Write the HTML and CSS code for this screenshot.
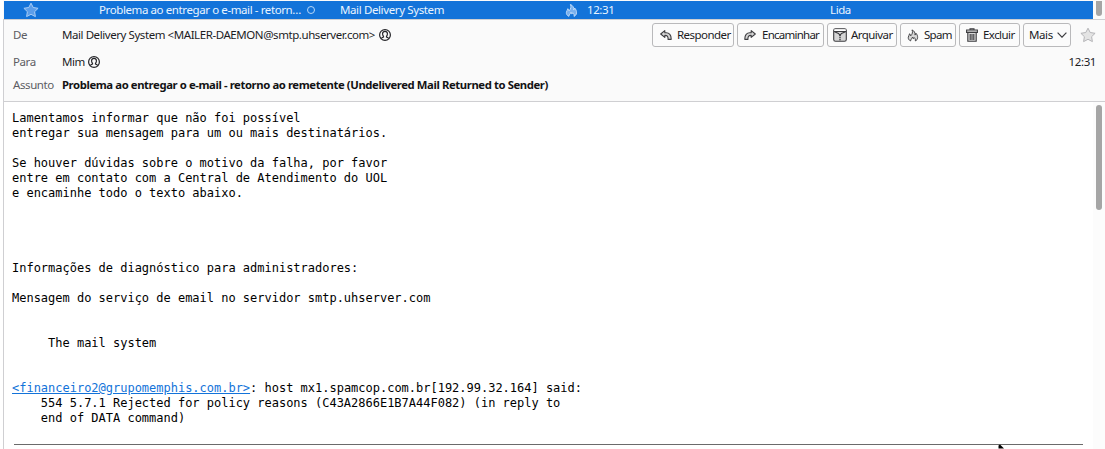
FILE: index.html
```html
<!DOCTYPE html>
<html lang="pt-BR">
<head>
<meta charset="utf-8">
<title>Problema ao entregar o e-mail</title>
<link rel="stylesheet" href="styles.css">
</head>
<body>
<svg class="defs" width="0" height="0">
  <symbol id="star" viewBox="0 0 16 16"><path d="M8 1.200 10.200 5.500l4.900.8-3.500 3.400.8 4.900L8 12.300l-4.400 2.300.8-4.900L.9 6.300l4.900-.8z" stroke-linejoin="round"/></symbol>
  <symbol id="person" viewBox="0 0 12 12"><circle cx="6" cy="6" r="5.400"/><path d="M2.200 9.700c.3-1 1.300-1.300 2.300-1.700V7.300C3.600 6.500 3.500 5.500 3.600 4.400 3.700 2.900 4.800 2.300 6 2.300s2.300.6 2.400 2.100c.1 1.100 0 2.100-.9 2.900V8c1 .4 2 .7 2.300 1.700"/></symbol>
  <symbol id="flame" viewBox="0 0 14 16"><path d="M4.200 14.300C2 13.300 1.300 11.800 1.500 10 1.700 8.400 2.700 7.700 3 6c1 .6 1.200 1.500 1.200 2.500C6.300 6.500 7 4 5.800 1.500c2.700 1 4 3.500 3.500 6 .7-.6 1-1.300 1-2.200C11.700 6.500 12.500 8.500 12.400 10.500c-.1 1.900-1 3.100-2.700 3.800.4-1.600-.2-2.900-1.300-3.900-.3.800-.6 1.100-1 1.400-.1-.9-.5-1.500-1-2-.2 1.800-2.100 2.300-2.200 4.500z" stroke-linejoin="round"/></symbol>
  <symbol id="reply" viewBox="0 0 12 12"><path d="M4.800 1.600.7 5l4.100 3.400V6.400c2.300-.2 3.400.8 3.300 4h3C11.500 6 9 3.600 6 3.700l-1.200 0z" stroke-linejoin="round"/></symbol>
</svg>
<div class="window">
  <div class="list">
    <div class="row">
      <svg class="row-star"><use href="#star"/></svg>
      <span class="row-subject">Problema ao entregar o e-mail - retorn…</span>
      <i class="dot"></i>
      <span class="row-from">Mail Delivery System</span>
      <svg class="row-flame"><use href="#flame"/></svg>
      <span class="row-time">12:31</span>
      <span class="row-status">Lida</span>
    </div>
    <div class="list-thumb"></div>
  </div>
  <header class="header">
    <div class="line from">
      <span class="label">De</span>
      <span class="sender">Mail Delivery System &lt;MAILER-DAEMON@smtp.uhserver.com&gt;</span>
      <svg class="person"><use href="#person"/></svg>
      <div class="toolbar">
        <button class="btn reply"><svg class="icon arrow"><use href="#reply"/></svg><span>Responder</span></button>
        <button class="btn forward"><svg class="icon arrow flip"><use href="#reply"/></svg><span>Encaminhar</span></button>
        <button class="btn archive"><svg class="icon box" viewBox="0 0 14 14"><rect x=".7" y=".7" width="12.600" height="12.600" rx="1.800"/><path class="lid" d="M1.300 3.300V1.300h11.400v2z"/><path d="M1 3.500h12M1.500 3.800l4 1.700L7 7.300l1.500-1.800 4-1.700"/><path d="M7 7.300v6" stroke-dasharray="1 1" stroke-width="1.800"/></svg><span>Arquivar</span></button>
        <button class="btn spam"><svg class="icon flame"><use href="#flame"/></svg><span>Spam</span></button>
        <button class="btn delete"><svg class="icon bin" viewBox="0 0 12 14"><path d="M4 2V.7h4V2M.6 2h10.800v2.400H.6zM1.800 4.400h8.400V13.300H1.800zM4.200 6v6M6 6v6M7.800 6v6"/></svg><span>Excluir</span></button>
        <button class="btn more"><span>Mais</span><svg class="chevron" viewBox="0 0 10 6"><path d="M.6.7 5 5.200 9.400.7"/></svg></button>
      </div>
      <svg class="fav"><use href="#star"/></svg>
    </div>
    <div class="line to">
      <span class="label">Para</span>
      <span class="me">Mim</span>
      <svg class="person"><use href="#person"/></svg>
      <span class="time">12:31</span>
    </div>
    <div class="line subject">
      <span class="label">Assunto</span>
      <strong class="title">Problema ao entregar o e-mail - retorno ao remetente (Undelivered Mail Returned to Sender)</strong>
    </div>
  </header>
  <main class="message">
    <div class="content">
<pre class="text">Lamentamos informar que não foi possível
entregar sua mensagem para um ou mais destinatários.

Se houver dúvidas sobre o motivo da falha, por favor
entre em contato com a Central de Atendimento do UOL
e encaminhe todo o texto abaixo.




Informações de diagnóstico para administradores:

Mensagem do serviço de email no servidor smtp.uhserver.com


     The mail system


<a class="link" href="#">&lt;financeiro2@grupomemphis.com.br&gt;</a>: host mx1.spamcop.com.br[192.99.32.164] said:
    554 5.7.1 Rejected for policy reasons (C43A2866E1B7A44F082) (in reply to
    end of DATA command)</pre>
      <div class="rule"></div>
    </div>
    <div class="scroll"><div class="thumb"></div></div>
    <svg class="pointer" viewBox="0 0 8 5"><path d="M1.500 4.500V1.500L3 .5l4 4z"/></svg>
  </main>
</div>
</body>
</html>
```
FILE: styles.css
```css
* { box-sizing: border-box; }
body { margin: 0; background: #fff; overflow: hidden; }
.defs { position: absolute; }
.window {
  width: 1105px; height: 449px; padding-left: 3px; overflow: hidden;
  display: flex; flex-direction: column;
  font: 11.5px/16px "Noto Sans", sans-serif; letter-spacing: -.4px; color: #1c1c1f;
}
svg { display: block; flex: none; }
span, strong { white-space: nowrap; flex: none; }
.list { height: 19px; padding: 1px 0 0 1px; display: flex; justify-content: space-between; background: #fafafa; }
.row { width: 1089px; height: 18px; background: #1373d9; color: #e9f3ff; display: flex; align-items: center; flex: none; }
.row-star { width: 16px; height: 16px; margin-left: 19px; fill: #5c9eea; stroke: #a9cdf5; stroke-width: 1; }
.row-subject { width: 203px; margin-left: 60px; }
.dot { width: 8px; height: 8px; margin-left: 5px; border: 1px solid #b9d7f8; border-radius: 50%; flex: none; }
.row-from { width: 225px; margin-left: 25px; letter-spacing: -.38px; }
.row-flame { width: 13px; height: 15px; fill: #79b0ee; stroke: #c5def9; stroke-width: 1; }
.row-time { width: 230px; margin-left: 9px; }
.row-status { margin-left: 13px; }
.list-thumb { width: 6px; height: 15px; margin-right: 3px; background: #a5a5a5; border-radius: 0 0 3px 3px; }
.header { height: 83px; background: #fafafa; border: solid #cfcfd2; border-width: 1px 0 1px 1px; flex: none; }
.line { display: flex; align-items: center; padding-left: 9px; }
.from { height: 30px; }
.to { height: 24px; }
.subject { height: 22px; }
.label { width: 49px; color: #5d5d63; }
.person { width: 12px; height: 12px; margin-left: 4px; fill: none; stroke: #242428; stroke-width: 1.200; }
.sender { width: 313px; letter-spacing: -.43px; }
.me { width: 22px; }
.toolbar { display: flex; gap: 3px; margin-left: 261px; }
.btn {
  height: 24px; padding: 0; display: flex; align-items: center;
  border: 1px solid #b9b9bb; border-radius: 3px; background: #fbfbfb;
  font: inherit; letter-spacing: -.55px; color: inherit; flex: none;
}
.reply { width: 82px; padding-left: 7px; }
.forward { width: 87px; padding-left: 6px; letter-spacing: -.75px; }
.archive { width: 70px; padding-left: 5px; }
.spam { width: 56px; padding-left: 6px; letter-spacing: -.7px; }
.delete { width: 61px; padding-left: 6px; }
.more { width: 48px; padding-left: 5px; letter-spacing: -.4px; }
.icon { fill: #d6d6d6; stroke: #3d3d40; stroke-width: 1.100; }
.lid { fill: #fff; stroke: none; }
.arrow { width: 12px; height: 12px; margin-right: 5px; }
.flip { transform: scaleX(-1); margin-right: 6px; }
.box { width: 14px; height: 14px; margin-right: 4px; }
.flame { width: 12px; height: 15px; margin-right: 5px; }
.bin { width: 12px; height: 14px; margin-right: 5px; }
.chevron { width: 10px; height: 6px; margin-left: 4px; fill: none; stroke: #3d3d40; stroke-width: 1.200; }
.fav { width: 16px; height: 16px; margin-left: 9px; fill: #e4e4e4; stroke: #b5b5b8; }
.time { margin-left: auto; padding-right: 9px; }
.title { font-size: 11.3px; font-weight: 700; color: #121214; }
.message { flex: 1; position: relative; display: flex; border-left: 1px solid #cfcfd2; background: #fff; }
.content { flex: 1; padding: 9px 10px 0 8px; }
.text { margin: 0; font: 12px/15px "DejaVu Sans Mono", monospace; letter-spacing: -.01px; color: #000; }
.link { color: #1373d9; text-decoration: underline; }
.rule { height: 1px; margin: 18px 0 0 2px; background: #6b6b6b; }
.scroll { width: 12px; background: #fcfcfc; padding: 3px 0 0 3px; }
.thumb { width: 6px; height: 105px; border-radius: 3px; background: #a5a5a5; }
.pointer { position: absolute; left: 993px; bottom: 0; width: 8px; height: 5px; fill: #000; }
```
